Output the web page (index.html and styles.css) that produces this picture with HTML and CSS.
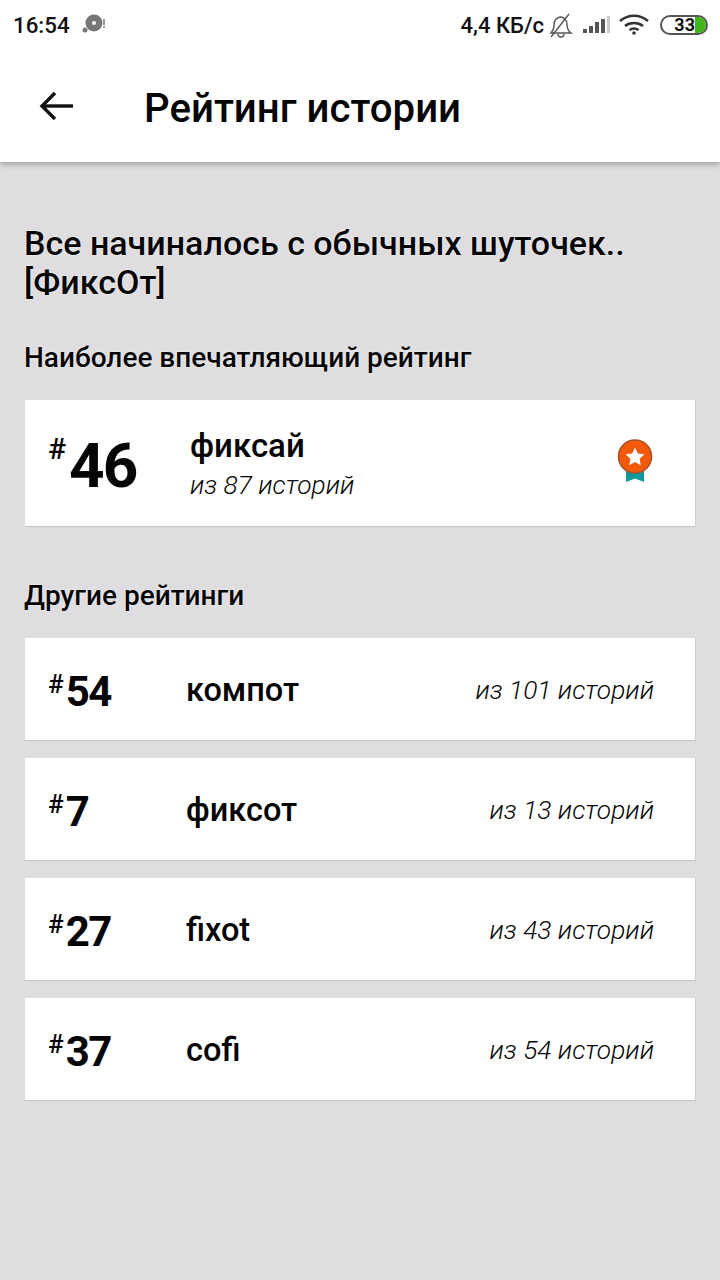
FILE: index.html
```html
<!DOCTYPE html>
<html>
<head>
<meta charset="utf-8">
<title>Рейтинг истории</title>
<link rel="stylesheet" href="styles.css">
</head>
<body>
	<div class="status">
		<span class="time">16:54</span>
		<svg class="disc" width="28" height="24" viewBox="0 0 28 24">
			<circle cx="13" cy="10" r="8.5" fill="#777"/>
			<circle cx="13" cy="10" r="2" fill="#fff"/>
			<circle cx="4" cy="17" r="2.5" fill="#777"/>
			<rect x="22" y="6" width="2" height="6" fill="#999"/>
			<rect x="22" y="13" width="2" height="2" fill="#999"/>
		</svg>
		<span class="speed">4,4 КБ/с</span>
		<svg class="bell" width="24" height="26" viewBox="0 0 24 26" fill="none" stroke="#555" stroke-width="1.4">
			<path d="M2 21c2-2 3-4 3-8 0-4 2-7 6-8 4 0 7 3 7 7 0 4 1 7 4 9z"/>
			<path d="M9 22c0 2 1 3 3 3s3-1 3-3"/>
			<path d="M2 25 20 2"/>
		</svg>
		<svg class="signal" width="28" height="20" viewBox="0 0 28 20">
			<rect x="0" y="14" width="4" height="4" fill="#555"/>
			<rect x="6" y="11" width="4" height="7" fill="#555"/>
			<rect x="12" y="7" width="4" height="11" fill="#555"/>
			<rect x="18" y="4" width="4" height="14" fill="#555"/>
			<rect x="24" y="1" width="3" height="17" fill="#ccc"/>
		</svg>
		<svg class="wifi" width="30" height="22" viewBox="0 0 30 22" fill="none" stroke="#333" stroke-width="2.6">
			<path d="M1 7c8-7 20-7 28 0"/>
			<path d="M6 12c5-4 13-4 18 0"/>
			<path d="M10.500 16c3-2 6-2 9 0"/>
			<circle cx="15" cy="19" r="1.800" fill="#333" stroke="none"/>
		</svg>
		<div class="battery">
			<span class="battery-num">33</span>
			<span class="battery-fill"></span>
		</div>
	</div>

	<div class="toolbar">
		<svg class="back" width="36" height="32" viewBox="0 0 36 32" fill="none" stroke="#111" stroke-width="3.4">
			<path d="M35 16H4"/>
			<path d="M17 3 4 16l13 13"/>
		</svg>
		<h1 class="toolbar-title">Рейтинг истории</h1>
	</div>

	<div class="content">
		<h2 class="story-title">Все начиналось с обычных шуточек.. [ФиксОт]</h2>
		<h3 class="section">Наиболее впечатляющий рейтинг</h3>

		<div class="card best">
			<div class="best-rank"><span class="hash best-hash">#</span><span class="best-num">46</span></div>
			<div class="best-info">
				<div class="best-name">фиксай</div>
				<div class="best-of">из 87 историй</div>
			</div>
			<svg class="medal" width="36" height="43" viewBox="0 0 36 43">
				<path d="M9 28h18v15l-9-3.500-9 3.500z" fill="#11989a"/>
				<circle cx="18" cy="17.500" r="16.500" fill="#f4590a" stroke="#a9532a" stroke-width="1.600"/>
				<path d="M18 8.500l2.900 5.900 6.500.9-4.700 4.500 1.100 6.400-5.800-3.100-5.800 3.100 1.100-6.400-4.700-4.500 6.500-.9z" fill="#fff"/>
			</svg>
		</div>

		<h3 class="section section-other">Другие рейтинги</h3>

		<div class="card row">
			<div class="rank"><span class="hash">#</span><span class="num">54</span></div>
			<div class="name">компот</div>
			<div class="of">из 101 историй</div>
		</div>
		<div class="card row">
			<div class="rank"><span class="hash">#</span><span class="num">7</span></div>
			<div class="name">фиксот</div>
			<div class="of">из 13 историй</div>
		</div>
		<div class="card row">
			<div class="rank"><span class="hash">#</span><span class="num">27</span></div>
			<div class="name">fixot</div>
			<div class="of">из 43 историй</div>
		</div>
		<div class="card row">
			<div class="rank"><span class="hash">#</span><span class="num">37</span></div>
			<div class="name">cofi</div>
			<div class="of">из 54 историй</div>
		</div>
	</div>
</body>
</html>
```

FILE: styles.css
```css
* {
	margin: 0;
	padding: 0;
	box-sizing: border-box;
}
html, body {
	height: 1280px;
	overflow: hidden;
}
body {
	background-color: #dfdde0;
	font-family: Roboto, "Noto Sans", sans-serif;
	color: #050505;
}
/* строка состояния */
.status {
	height: 54px;
	background-color: #fff;
	display: flex;
	align-items: center;
	padding: 0 12px 4px 13px;
	position: relative;
	z-index: 2;
}
.time {
	font-size: 22.3px;
	font-weight: 500;
	color: #111;
}
.disc {
	margin-left: 11px;
	margin-right: auto;
}
.speed {
	font-size: 22px;
	font-weight: 500;
	color: #111;
}
.bell {
	margin-left: 5px;
}
.signal {
	margin-left: 10px;
}
.wifi {
	margin-left: 8px;
}
.battery {
	width: 48px;
	height: 20px;
	margin-left: 11px;
	border: 2px solid #555;
	border-radius: 10px;
	display: flex;
	align-items: center;
	justify-content: flex-end;
}
.battery-num {
	font-size: 18px;
	font-weight: 700;
	line-height: 16px;
	color: #111;
}
.battery-fill {
	width: 11px;
	height: 16px;
	background-color: #45b41c;
	border-radius: 0 8px 8px 0;
}
/* шапка */
.toolbar {
	height: 108px;
	background-color: #fff;
	display: flex;
	align-items: center;
	padding: 0 0 0 38px;
	box-shadow: 0 2px 6px rgba(0, 0, 0, 0.3);
	position: relative;
}
.back {
	margin-bottom: 4px;
}
.toolbar-title {
	margin-left: 70px;
	font-size: 40.2px;
	font-weight: 500;
}
.content {
	padding: 62px 24px 0 24px;
}
/* белый ореол вокруг текста на сером фоне */
.story-title {
	font-size: 34px;
	font-weight: 500;
	line-height: 39px;
	text-shadow: 0 0 2px #fff;
}
.section {
	margin-top: 40px;
	font-size: 28px;
	font-weight: 500;
	line-height: 32px;
	text-shadow: 0 0 2px #fff;
}
.section-other {
	margin-top: 53px;
}
.card {
	background-color: #fff;
	margin-left: 1px;
	border-bottom: 1px solid #c4c4c4;
	border-right: 1px solid #cfcfcf;
	display: flex;
	align-items: center;
}
.best {
	height: 127px;
	margin-top: 26px;
	padding: 4px 42px 0 23px;
}
.best-rank {
	width: 142px;
	padding-top: 2px;
	display: flex;
}
.hash {
	font-size: 26px;
	font-weight: 500;
	line-height: 30px;
	margin-top: 1px;
}
.best-hash {
	font-size: 30px;
	margin-top: 3px;
}
.best-num {
	font-size: 62px;
	font-weight: 700;
	letter-spacing: -2px;
	line-height: 70px;
	margin-left: 3px;
}
.best-info {
	flex: 1;
}
.best-name {
	font-size: 33px;
	font-weight: 500;
	line-height: 38px;
}
.best-of {
	font-size: 26.3px;
	font-weight: 300;
	font-style: italic;
	line-height: 38px;
	margin-top: 1px;
}
.medal {
	margin-bottom: 10px;
}
.row {
	height: 103px;
	margin-top: 17px;
	padding: 2px 41px 0 23px;
}
.section-other + .row {
	margin-top: 26px;
}
.rank {
	width: 138px;
	padding-top: 4px;
	display: flex;
}
.num {
	font-size: 42px;
	font-weight: 700;
	letter-spacing: -1.5px;
	line-height: 48px;
	margin-left: 2px;
}
.name {
	flex: 1;
	font-size: 32.5px;
	font-weight: 500;
}
.of {
	font-size: 26.3px;
	font-weight: 300;
	font-style: italic;
}
```
